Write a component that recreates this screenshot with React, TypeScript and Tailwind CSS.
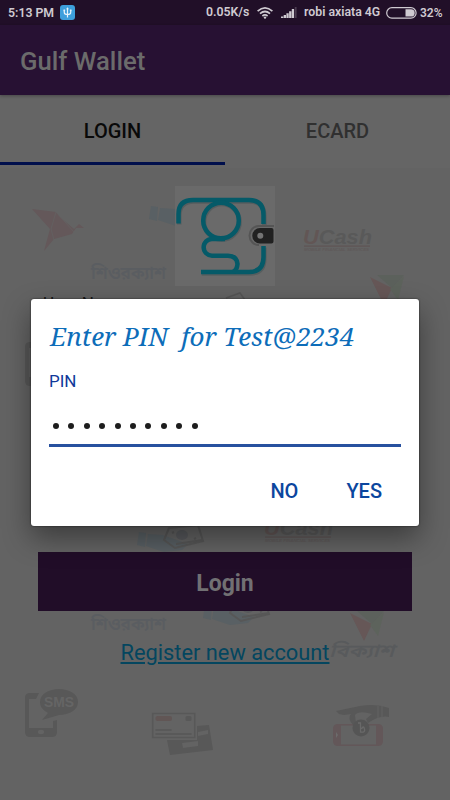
import React from 'react';

const PIN_LENGTH = 10;

const UsbIcon = () => (
  <svg width="15" height="15" viewBox="0 0 15 15" className="shrink-0">
    <rect width="15" height="15" rx="3" fill="#3d9fdc" />
    <g stroke="#e6f3fb" fill="none" strokeWidth="1.2">
      <path d="M7.5 3.5v9M4.3 5.2v2.3q0 2 3.2 2t3.2-2V5.2" />
    </g>
    <path d="M7.5 2.2l1.4 2H6.1zM3.5 4.6h1.6v1.6H3.5zM9.9 4.6h1.6v1.6H9.9z" fill="#e6f3fb" />
  </svg>
);

const WifiIcon = () => (
  <svg width="16" height="12" viewBox="0 0 16 12" className="shrink-0" fill="none" stroke="#cfcad1" strokeWidth="1.7">
    <path d="M.6 4.2q7.4-6.6 14.8 0M3 6.7q5-4.4 10 0M5.4 9q2.6-2.2 5.2 0" />
    <circle cx="8" cy="10.6" r="1.2" fill="#cfcad1" stroke="none" />
  </svg>
);

const SignalIcon = () => (
  <svg width="16" height="11" viewBox="0 0 16 11" className="shrink-0" fill="#cfcad1">
    <path d="M0 9.5h2.300V11H0zM2.700 8h2.300v3H2.700zM5.400 6.200h2.300V11H5.400zM8.100 4.200h2.300V11H8.100zM10.800 2h2.300v9h-2.300z" />
    <path d="M13.8 0h1.8v11h-1.8z" fill="#4a3b50" />
  </svg>
);

const BatteryIcon = () => (
  <svg width="31" height="12" viewBox="0 0 31 12" className="shrink-0">
    <rect x=".7" y=".7" width="29.4" height="10.4" rx="5.2" fill="none" stroke="#cfcad1" strokeWidth="1.2" />
    <path d="M19.5 2.2H25a3.7 3.7 0 0 1 0 7.4h-5.5z" fill="#cfcad1" />
  </svg>
);

const WalletLogo = () => (
  <svg width="100" height="100" viewBox="0 0 100 100" className="bg-[#6a6a6a]">
    <g fill="none" stroke="#3f4f52" strokeWidth="4.5" opacity=".45" transform="translate(.8 1.4)">
      <path d="M3.5 37V28Q3.5 14 18 14H74Q88.5 14 88.5 29V39M88.5 60V71Q88.5 86 74 86H26" />
      <circle cx="46" cy="34.5" r="17.8" />
    </g>
    <g fill="none" stroke="#055a68" strokeWidth="4.5">
      <path d="M3.5 37.5V28Q3.5 14 18 14H74Q88.5 14 88.5 29V38M88.5 60V71Q88.5 86 74 86H26" />
      <circle cx="46" cy="34.5" r="17.8" />
      <path d="M50 53H37a8.3 8.3 0 0 0 0 16.7H53Q62 70 62.5 78Q62 84 58 86" />
    </g>
    <path d="M99 40H84a9.5 9.5 0 0 0 0 19" fill="none" stroke="#555" strokeWidth="2" />
    <path d="M85 42H96.5Q98.5 42 98.5 44V55.5Q98.5 57.5 96.5 57.5H85a7.75 7.75 0 0 1 0-15.5z" fill="#212121" />
    <circle cx="85.3" cy="49.8" r="3" fill="#747474" />
  </svg>
);

const UCashMark = ({ x, y }: { x: number; y: number }) => (
  <g transform={`translate(${x} ${y})`} fontFamily="'Liberation Sans', sans-serif" fontStyle="italic" fontWeight="700">
    <text x="0" y="14" fontSize="20" textLength="69" lengthAdjust="spacingAndGlyphs" fill="#595959">
      <tspan fill="#625655">U</tspan>Cash
    </text>
    <path d="M1 16.2h66" stroke="#5f5555" strokeWidth="1.3" />
    <text x="1" y="21" fontSize="4" textLength="65" lengthAdjust="spacingAndGlyphs" fill="#5f5959">MOBILE FINANCIAL SERVICES</text>
  </g>
);

const HandMoney = ({ x, y }: { x: number; y: number }) => (
  <g transform={`translate(${x} ${y})`}>
    <path d="M1 5l7 1-1 14-8-2zM10 7l15 1 25 9-6 6-18 2-18-6z" fill="#596064" />
    <path d="M31 1l29-3 5 16-28 7-11-8z" fill="none" stroke="#575757" strokeWidth="2" />
    <ellipse cx="44" cy="8" rx="6" ry="5" fill="#57595c" />
    <path d="M34 6l2-1M56 12l2-1M38 17l27-4" stroke="#575757" strokeWidth="2" />
  </g>
);

const Kite = ({ x, y }: { x: number; y: number }) => (
  <g transform={`translate(${x} ${y})`}>
    <path d="M0 2l22 11-8 17z" fill="#665757" />
    <path d="M7 0h27l-12 13z" fill="#5c615c" />
    <path d="M34 1l-6 24-8-11z" fill="#5d635c" />
  </g>
);

const PhoneOutline = ({ y }: { y: number }) => (
  <g transform={`translate(25 ${y})`}>
    <path d="M14 0H5Q0 0 0 5v34q0 5 5 5h22q5 0 5-5V27l-4 1v7H4V6h7z" fill="#585858" />
    <ellipse cx="16" cy="39" rx="3" ry="2.2" fill="#636363" />
  </g>
);

const SmsBubble = () => (
  <g transform="translate(25 693)">
    <path d="M34-4c10 0 19 5 19 13s-9 13-19 13l-17 5 6-7c-5-3-8-6-8-11 0-8 9-13 19-13z" fill="#585858" />
    <text x="19" y="14" fontSize="15" fontWeight="700" textLength="30" lengthAdjust="spacingAndGlyphs" fill="#656565" fontFamily="'Liberation Sans', sans-serif">SMS</text>
  </g>
);

const Backdrop = () => (
  <svg width="450" height="800" viewBox="0 0 450 800" className="absolute inset-0">
    <path d="M32 209l24 3 4 5 14 12 5-5 5 4-8 0-4 6-18 5-10 12 6-22z" fill="#64585a" />
    <path d="M56 212l-5 17 3 11M56 212l18 20" fill="none" stroke="#636363" strokeWidth=".7" />
    <g fontFamily="'Noto Sans Bengali', 'Noto Sans', sans-serif" fontWeight="600">
      <text x="91" y="279" fontSize="17" textLength="75" lengthAdjust="spacingAndGlyphs" fill="#5a5d61">শিওরক্যাশ</text>
      <text x="91" y="630" fontSize="17" textLength="75" lengthAdjust="spacingAndGlyphs" fill="#5a5d61">শিওরক্যাশ</text>
      <text x="329" y="657" fontSize="18" fontStyle="italic" textLength="65" lengthAdjust="spacingAndGlyphs" fill="#585a5c">বিক্যাশ</text>
    </g>
    <HandMoney x={150} y={201} />
    <HandMoney x={138} y={527} />
    <HandMoney x={204} y={600} />
    <path d="M226 298l14-5 5 7" fill="none" stroke="#555" strokeWidth="1.5" />
    <UCashMark x={303} y={230} />
    <UCashMark x={264} y={521} />
    <Kite x={370} y={275} />
    <Kite x={350} y={611} />
    <PhoneOutline y={342} />
    <PhoneOutline y={693} />
    <SmsBubble />
    <rect x="152.7" y="713.5" width="42" height="24" fill="none" stroke="#585858" strokeWidth="1.5" />
    <rect x="155.500" y="716" width="16.5" height="5" rx="2" fill="#615655" />
    <rect x="185.500" y="716" width="6" height="5" rx="1.5" fill="#585858" />
    <path d="M155.5 730h16M155.5 734h36" stroke="#595959" strokeWidth="2" />
    <path d="M197 726l12-1 4 25-43 5-3-15h30zM198 732l10-2v4l-10 2zM182 743l16-2v5l-15 2z" fill="#585858" fillRule="evenodd" />
    <path d="M338 724h40q5 0 5 5v12q0 5-5 5h-40q-5 0-5-5v-12q0-5 5-5zM341 725.5v19h35v-19z" fill="#635759" fillRule="evenodd" />
    <path d="M336 732l2 3-2 3z" fill="#6c6c6c" />
    <path d="M336 711l24-5q16-3 29 2v9q-9-2-21 6l-2-4 6-5q-13-4-17 1l1 9-3 1q-6-7-2-11l-7 1-5-1z" fill="#585858" />
    <path d="M378 706v12M382 706v12" stroke="#636363" strokeWidth="1" />
    <circle cx="361" cy="728" r="8.5" fill="#555" />
    <path d="M358 723h2.5v9q5 1 4-3t-3 0" fill="none" stroke="#696969" strokeWidth="1.3" />
  </svg>
);

const StatusBar = () => (
  <div className="h-[25px] bg-[#210f28] flex items-center text-[12px] font-semibold text-[#cfcad1] px-[8px] whitespace-nowrap">
    <span className="w-[52px] text-[12.3px] pt-px">5:13 PM</span>
    <UsbIcon />
    <div className="flex items-center ml-auto">
      <span className="w-[51px] text-[12.3px]">0.05K/s</span>
      <WifiIcon />
      <span className="w-[8px]" />
      <SignalIcon />
      <span className="ml-[7px] w-[82px] text-[12.3px]">robi axiata 4G</span>
      <BatteryIcon />
      <span className="ml-[3px] w-[22px]">32%</span>
    </div>
  </div>
);

const PinDialog = () => (
  <div className="absolute left-[31px] top-[299px] w-[388px] h-[227px] bg-white rounded-[3px] px-[18px] flex flex-col shadow-[0_12px_28px_rgba(0,0,0,0.4),0_0_2px_rgba(0,0,0,0.7)]">
    <h2 className="mt-[19px] h-[36px] pl-px leading-[36px] text-[26px] tracking-[-0.07px] italic text-[#0d6db9] whitespace-pre font-['Noto_Serif','DejaVu_Serif_Condensed','DejaVu_Serif',serif]">
      Enter PIN  for Test@2234
    </h2>
    <label className="mt-[16px] h-[22px] leading-[22px] text-[17px] text-[#10399a]">PIN</label>
    <div className="h-[55px] flex items-center gap-[9.4px] pl-[4px] pt-[16px] border-b-[3px] border-[#28519f]">
      {Array.from({ length: PIN_LENGTH }, (_, i) => (
        <span key={i} className="w-[6px] h-[6.5px] rounded-full bg-[#1d1d1d]" />
      ))}
    </div>
    <div className="mt-[31px] flex justify-end gap-[48px] pr-[19px] text-[20px] leading-[26px] font-medium text-[#0b469e]">
      <button>NO</button>
      <button>YES</button>
    </div>
  </div>
);

const App: React.FC = () => {
  return (
    <div className="relative w-[450px] h-[800px] overflow-hidden bg-[#636363] font-[Roboto,sans-serif]">
      <Backdrop />
      <div className="relative">
        <StatusBar />
        <header className="h-[70px] bg-[#271133] px-[20px] pt-[3px] flex items-center shadow-[0_1px_3px_rgba(0,0,0,0.3)] relative z-10">
          <h1 className="text-[25.7px] font-medium text-[#6b6b6b]">Gulf Wallet</h1>
        </header>

        <nav className="h-[73px] bg-[#656565] flex text-[20px] font-medium">
          <div className="w-1/2 h-[70px] flex items-center justify-center text-[#090909] border-b-[3px] border-[#000f4c] pt-[4px]">LOGIN</div>
          <div className="w-1/2 h-[70px] flex items-center justify-center text-[#303030] pt-px">ECARD</div>
        </nav>

        <main className="flex flex-col px-[38px]">
          <div className="mt-[18px] flex justify-center">
            <WalletLogo />
          </div>
          <div className="mt-[6px] h-[260px] pl-[5px] text-[17px] leading-[22px] text-[#171717]">User Name</div>
          <button className="h-[59px] pt-[5px] bg-[#210d28] text-[23px] font-bold text-[#717073]">Login</button>
          <a className="self-center mt-[28px] text-[21.8px] leading-[28px] text-[#04465f] underline decoration-[1.5px] underline-offset-[2px]">
            Register new account
          </a>
        </main>
      </div>
      <PinDialog />
    </div>
  );
};

export default App;
